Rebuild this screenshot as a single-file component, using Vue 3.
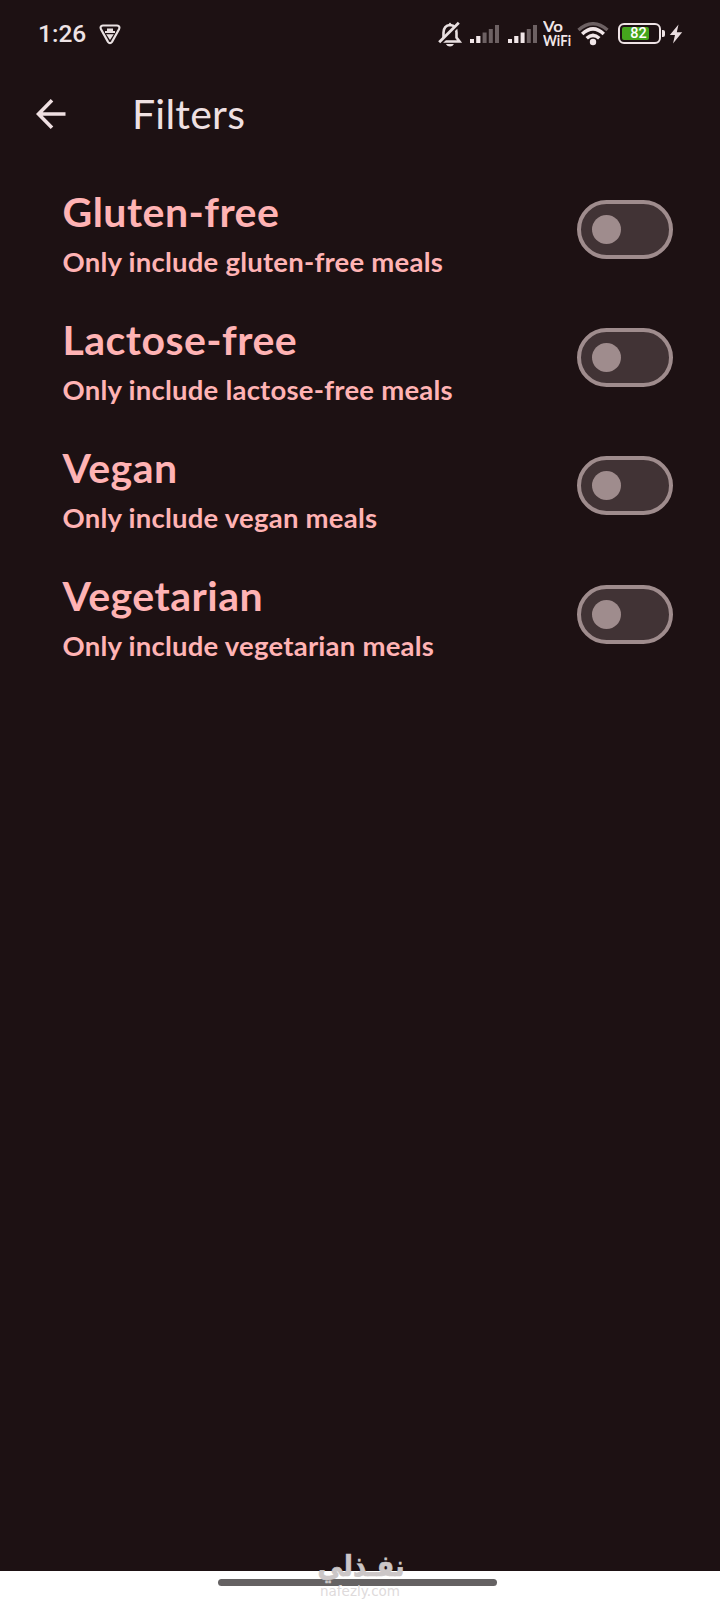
<script setup>
import { ref } from 'vue'

const filters = ref([
  { title: 'Gluten-free', note: 'Only include gluten-free meals', on: false },
  { title: 'Lactose-free', note: 'Only include lactose-free meals', on: false },
  { title: 'Vegan', note: 'Only include vegan meals', on: false },
  { title: 'Vegetarian', note: 'Only include vegetarian meals', on: false },
])
</script>

<template>
  <div class="screen">
    <div class="status">
      <span class="clock">1:26</span>
      <svg class="shield" width="22" height="21" viewBox="0 0 22 21">
        <path d="M4 1.5H18Q21.5 2 20 5.2L13 17.8Q11 20.5 9 17.8L2 5.2Q.5 2 4 1.5Z" fill="none" stroke="#e9e0e1" stroke-width="2.2" />
        <path d="M8 4.5H14V7H16V9H6V7H8ZM7.2 10.2H14.8L11 16Z" fill="#e9e0e1" />
      </svg>
      <div class="indicators">
        <svg width="26" height="28" viewBox="0 0 26 28">
          <path d="M5.2 20.5L6.5 17.5V12.5Q6.8 5.5 13 5Q19.5 5.5 19.5 12.5V17.5L22.5 21.5H6" fill="none" stroke="#e9e0e1" stroke-width="2.6" />
          <path d="M11 4.8L13 2.5L15 4.8ZM8.8 24H17Q15.5 26.5 13 26.5Q10.4 26.5 8.8 24Z" fill="#e9e0e1" />
          <path d="M4.2 22.6L22.2 4.8" stroke="#1d1113" stroke-width="3" />
          <path d="M2.2 22.2L21.8 2.8" stroke="#e9e0e1" stroke-width="2.8" />
        </svg>
        <svg class="signal" width="31" height="20" viewBox="0 0 31 20">
          <path d="M1 15h4V19H1ZM7.2 12h4.2V19h-4.2Z" fill="#f1e6e8" />
          <path d="M13.6 8.5h4v10.5h-4ZM19.8 5h4v14h-4ZM26 1h4v18h-4Z" fill="#6d6163" />
        </svg>
        <svg class="signal2" width="31" height="20" viewBox="0 0 31 20">
          <path d="M1 15h4V19H1ZM7.2 12h4.2V19h-4.2ZM13.6 8.5h4v10.5h-4Z" fill="#f1e6e8" />
          <path d="M19.8 5h4v14h-4ZM26 1h4v18h-4Z" fill="#6d6163" />
        </svg>
        <svg class="vowifi" width="30" height="36" viewBox="0 0 30 36">
          <text x="0" y="15.5" textLength="20" lengthAdjust="spacingAndGlyphs">Vo</text>
          <text x="0" y="30" textLength="28" lengthAdjust="spacingAndGlyphs">WiFi</text>
        </svg>
        <svg class="wifi" width="32" height="24" viewBox="0 0 32 24">
          <path d="M1.5 8Q16-4.5 30.5 8" fill="none" stroke="#6d6163" stroke-width="3.4" />
          <path d="M5.2 12Q16 1.8 26.8 12M9.7 16.3Q16 10.3 22.3 16.3" fill="none" stroke="#f1e6e8" stroke-width="3.5" />
          <circle cx="16" cy="20" r="3.2" fill="#f1e6e8" />
        </svg>
        <div class="battery"><div class="charge"></div><b>82</b></div>
        <i class="terminal"></i>
        <svg class="bolt" width="14" height="20" viewBox="0 0 14 20">
          <path d="M9.5.5L.8 11H6L4 19.5L13.2 8.3H7.8Z" fill="#e9dddf" />
        </svg>
      </div>
    </div>

    <header class="bar">
      <svg width="30" height="30" viewBox="0 0 30 30">
        <path d="M29.5 15H3M16 1.3L2.5 15L16 28.7" fill="none" stroke="#efe0e2" stroke-width="3.6" />
      </svg>
      <h1>Filters</h1>
    </header>

    <main class="list">
      <div v-for="f in filters" :key="f.title" class="row" @click="f.on = !f.on">
        <div class="label">
          <h2>{{ f.title }}</h2>
          <p>{{ f.note }}</p>
        </div>
        <div class="switch" :class="{ on: f.on }"><span class="thumb"></span></div>
      </div>
    </main>

    <footer class="nav">
      <div class="handle"></div>
      <svg class="mark" width="100" height="60" viewBox="0 0 100 60">
        <text x="51" y="34.5" text-anchor="middle" class="ar" direction="rtl" textLength="87" lengthAdjust="spacingAndGlyphs">نفـذلي</text>
        <text x="50" y="55" text-anchor="middle" class="en" textLength="80" lengthAdjust="spacingAndGlyphs">nafezly.com</text>
      </svg>
    </footer>
  </div>
</template>

<style>
body { background: #1d1113; }
</style>

<style scoped>
.screen {
  width: 720px;
  height: 1600px;
  display: flex;
  flex-direction: column;
  overflow: hidden;
  background: #1d1113;
  font-family: Lato, sans-serif;
}
.status {
  height: 68px;
  box-sizing: border-box;
  padding: 0 37px 0 38px;
  display: flex;
  align-items: center;
  color: #eee3e5;
}
.clock { font: 500 24.5px/30px Roboto, sans-serif; width: 61px; }
.indicators { margin-left: auto; display: flex; align-items: center; }
.signal { margin-left: 6px; }
.signal2 { margin-left: 7px; }
.vowifi { margin-left: 5px; font: 700 15px Lato, sans-serif; fill: #f1e6e8; }
.wifi { margin-left: 4px; }
.battery {
  position: relative;
  width: 43px;
  height: 21px;
  box-sizing: border-box;
  margin-left: 9px;
  margin-top: -1px;
  border: 2px solid #eee3e5;
  border-radius: 6px;
  padding: 2px;
}
.charge { width: 27px; height: 13px; border-radius: 2px; background: #45a51d; }
.battery b {
  position: absolute;
  inset: 0 2px 0 0;
  text-align: center;
  font: 500 14.5px/18px Roboto, sans-serif;
  color: #fff;
}
.terminal { width: 3px; height: 7px; margin: -1px 0 0 1px; border-radius: 0 2px 2px 0; background: #eee3e5; }
.bolt { margin-left: 4px; }
.bar {
  height: 92px;
  box-sizing: border-box;
  padding: 0 0 0 36px;
  display: flex;
  align-items: center;
  gap: 66px;
}
h1 { margin: 0; font-weight: 400; font-size: 41px; line-height: 52px; letter-spacing: 0.25px; color: #efe0e2; }
.list { flex: 1; padding-top: 5.5px; }
.row {
  height: 128.2px;
  box-sizing: border-box;
  padding: 0 47px 0 62.5px;
  display: flex;
  align-items: center;
}
.label { flex: 1; padding-top: 7.6px; color: #ffb3b4; }
h2 { margin: 0; font-weight: 700; font-size: 41px; line-height: 52px; letter-spacing: 0.48px; }
p { margin: 5px 0 0; font-weight: 700; font-size: 27.5px; line-height: 38px; letter-spacing: 0.23px; }
.switch {
  width: 96px;
  height: 59px;
  box-sizing: border-box;
  border: 4px solid #9f8c8d;
  border-radius: 30px;
  background: #413335;
  display: flex;
  align-items: center;
  padding: 0 11px;
}
.switch.on { justify-content: flex-end; }
.thumb { width: 29px; height: 29px; border-radius: 50%; background: #9f8c8d; }
.nav {
  position: relative;
  height: 29px;
  background: #fff;
  display: flex;
  justify-content: center;
}
.handle { width: 279px; height: 7px; margin: 8px 5px 0 0; border-radius: 4px; background: #656263; }
.mark { position: absolute; left: 310px; top: -30px; }
.ar { font: 700 29px "DejaVu Sans", sans-serif; fill: #cbc6c7; stroke: #cbc6c7; stroke-width: 0.7; }
.en { font: 400 14px "DejaVu Sans", sans-serif; fill: #dedadb; }
</style>
